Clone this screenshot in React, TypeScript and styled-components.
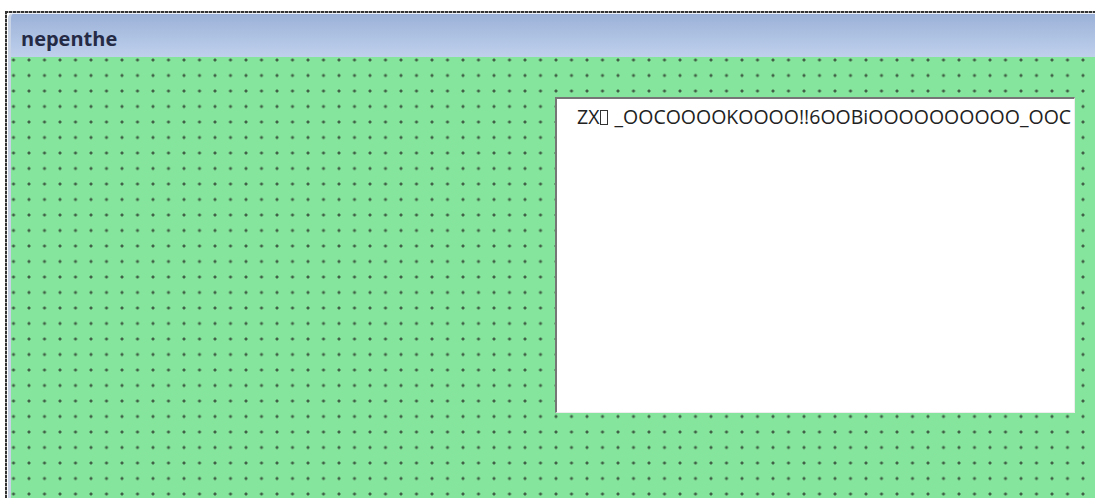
import React from "react";
import styled, { createGlobalStyle } from "styled-components";

const GlobalStyle = createGlobalStyle`
  html, body {
    margin: 0;
    padding: 0;
    background: #ffffff;
    overflow: hidden;
  }
`;

const Stage = styled.div`
  box-sizing: border-box;
  height: 498px;
  padding: 11px 0 0 5px;
  overflow: hidden;
`;

// designer selection frame: dashed marching-ants edges on top and left
const Selection = styled.div`
  box-sizing: border-box;
  height: 100%;
  padding: 2px 0 0 3px;
  display: flex;
  flex-direction: column;
  background:
    repeating-linear-gradient(90deg, #333333 0 3px, #b0b0b0 3px 4px) top left / 100% 2px no-repeat,
    repeating-linear-gradient(180deg, #333333 0 3px, #b0b0b0 3px 4px) top left / 2px 100% no-repeat;
`;

const Window = styled.div`
  flex: 1;
  display: flex;
  flex-direction: column;
  border-top: 1px solid #eef2f8;
  border-left: 3px solid #c8d4e6;
  border-top-left-radius: 5px;
  overflow: hidden;
`;

const TitleBar = styled.div`
  box-sizing: border-box;
  height: 43px;
  padding: 6px 0 0 10px;
  display: flex;
  align-items: center;
  background: linear-gradient(180deg, #9bb1d7 0%, #adc1e2 50%, #bfd0ec 100%);
  font-family: "Open Sans", "Noto Sans", sans-serif;
  font-weight: 700;
  font-size: 20px;
  color: #252a45;
`;

const Canvas = styled.div`
  flex: 1;
  display: flex;
  align-items: flex-start;
  padding: 40px 0 0 544px;
  background-color: #86e59c;
  background-image: radial-gradient(circle, #3f5e46 0 1.1px, rgba(63, 94, 70, 0) 1.9px);
  background-size: 15.5px 15.5px;
  background-position: -5.25px -4.75px;
`;

const TextBox = styled.div`
  box-sizing: border-box;
  width: 520px;
  height: 316px;
  flex-shrink: 0;
  padding: 4px 0 0 20px;
  background: #ffffff;
  border-top: 2px solid #767676;
  border-left: 2px solid #767676;
  border-right: 1px solid #ededed;
  border-bottom: 1px solid #ededed;
  overflow: hidden;
  white-space: nowrap;
  font-family: "Open Sans", "Noto Sans", sans-serif;
  font-size: 19.5px;
  color: #222222;
`;

// missing-glyph box as the control renders it
const Tofu = styled.span`
  display: inline-block;
  box-sizing: border-box;
  width: 8px;
  height: 15px;
  margin: 0 1px;
  border: 1.5px solid #333333;
  vertical-align: -1px;
`;

export default function App() {
  return (
    <>
      <GlobalStyle />
      <Stage>
        <Selection>
          <Window>
            <TitleBar>nepenthe</TitleBar>
            <Canvas>
              <TextBox>
                ZX<Tofu /> _OOCOOOOKOOOO!!6OOBiOOOOOOOOOO_OOC
              </TextBox>
            </Canvas>
          </Window>
        </Selection>
      </Stage>
    </>
  );
}
